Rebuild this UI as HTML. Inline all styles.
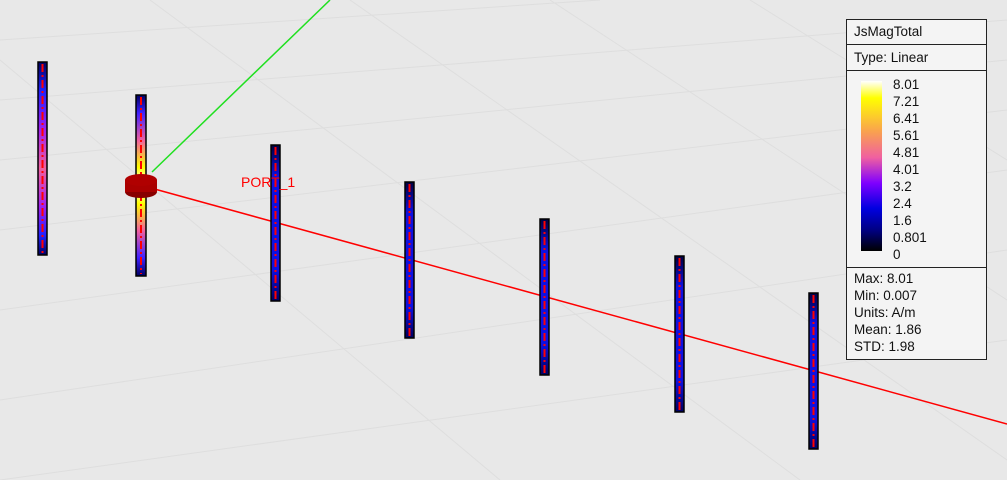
<!DOCTYPE html><html><head><style>
body{margin:0;width:1007px;height:480px;overflow:hidden;background:#e8e8e8;font-family:"Liberation Sans",sans-serif}
#lg{position:absolute;left:846px;top:19px;width:139px;height:339px;background:#f4f4f4;border:1px solid #222;font-size:13.5px;color:#111}
.s{border-bottom:1px solid #222;padding-left:7px}
</style></head><body>
<svg width="1007" height="480" style="position:absolute;left:0;top:0">
<defs>
<linearGradient id="d1" x1="0" y1="0" x2="0" y2="1"><stop offset="0" stop-color="#000060"/><stop offset=".15" stop-color="#2020ff"/><stop offset=".35" stop-color="#a020f0"/><stop offset=".55" stop-color="#f060a0"/><stop offset=".75" stop-color="#a020f0"/><stop offset=".9" stop-color="#2020ff"/><stop offset="1" stop-color="#000060"/></linearGradient>
<linearGradient id="d2" x1="0" y1="0" x2="0" y2="1"><stop offset="0" stop-color="#000060"/><stop offset=".1" stop-color="#4020ff"/><stop offset=".25" stop-color="#f060a0"/><stop offset=".4" stop-color="#ff0"/><stop offset=".5" stop-color="#fff"/><stop offset=".6" stop-color="#ff0"/><stop offset=".75" stop-color="#f060a0"/><stop offset=".9" stop-color="#4020ff"/><stop offset="1" stop-color="#000060"/></linearGradient>
<linearGradient id="d3" x1="0" y1="0" x2="0" y2="1"><stop offset="0" stop-color="#000040"/><stop offset=".2" stop-color="#1010e0"/><stop offset=".8" stop-color="#1010e0"/><stop offset="1" stop-color="#000060"/></linearGradient>
</defs>
<g stroke="#dedede" stroke-width="1" fill="none">
<path d="M0 100L1007 20M0 160L1007 60M0 230L1007 110M0 310L1007 170M0 400L1007 250M0 480L1007 340M0 40L600 0"/>
<path d="M0 60L500 480M150 0L800 480M350 0L1007 460M550 0L1007 300M750 0L1007 160"/>
</g>
<line x1="152" y1="172" x2="330" y2="0" stroke="#20e020" stroke-width="1.5"/>
<line x1="140" y1="185" x2="1007" y2="424" stroke="#f00" stroke-width="1.5"/>
<rect x="38" y="62" width="9" height="193" fill="url(#d1)" stroke="#000" stroke-width="1.5"/>
<rect x="136" y="95" width="10" height="181" fill="url(#d2)" stroke="#000" stroke-width="1.5"/>
<rect x="271" y="145" width="9" height="156" fill="url(#d3)" stroke="#000" stroke-width="1.5"/>
<rect x="405" y="182" width="9" height="156" fill="url(#d3)" stroke="#000" stroke-width="1.5"/>
<rect x="540" y="219" width="9" height="156" fill="url(#d3)" stroke="#000" stroke-width="1.5"/>
<rect x="675" y="256" width="9" height="156" fill="url(#d3)" stroke="#000" stroke-width="1.5"/>
<rect x="809" y="293" width="9" height="156" fill="url(#d3)" stroke="#000" stroke-width="1.5"/>
<g stroke="#f00" stroke-width="2" stroke-dasharray="8 3 2 3">
<line x1="42.5" y1="64" x2="42.5" y2="253"/><line x1="141" y1="97" x2="141" y2="274"/><line x1="275.5" y1="147" x2="275.5" y2="299"/><line x1="409.5" y1="184" x2="409.5" y2="336"/><line x1="544.5" y1="221" x2="544.5" y2="373"/><line x1="679.5" y1="258" x2="679.5" y2="410"/><line x1="813.5" y1="295" x2="813.5" y2="447"/>
</g>
<ellipse cx="141" cy="192" rx="16" ry="6" fill="#800"/>
<rect x="125" y="180" width="32" height="12" fill="#a00"/>
<ellipse cx="141" cy="180" rx="16" ry="6" fill="#b00000"/>
<text x="241" y="187" fill="#f00" font-size="14" font-family="Liberation Sans">PORT_1</text>
</svg>
<div id="lg">
<div class="s" style="height:24px;line-height:24px">JsMagTotal</div>
<div class="s" style="height:25px;line-height:25px">Type: Linear</div>
<div class="s" style="height:196px;position:relative">
<div style="position:absolute;left:14px;top:10px;width:21px;height:170px;background:linear-gradient(#fff,#ff0 10%,#f9a050 30%,#f060a0 45%,#8000ff 60%,#0000e0 75%,#000080 88%,#000)"></div>
<div style="position:absolute;left:46px;top:5px;line-height:17px">8.01<br>7.21<br>6.41<br>5.61<br>4.81<br>4.01<br>3.2<br>2.4<br>1.6<br>0.801<br>0</div>
</div>
<div style="padding:2px 0 0 7px;line-height:17px">Max: 8.01<br>Min: 0.007<br>Units: A/m<br>Mean: 1.86<br>STD: 1.98</div>
</div>
</body></html>
